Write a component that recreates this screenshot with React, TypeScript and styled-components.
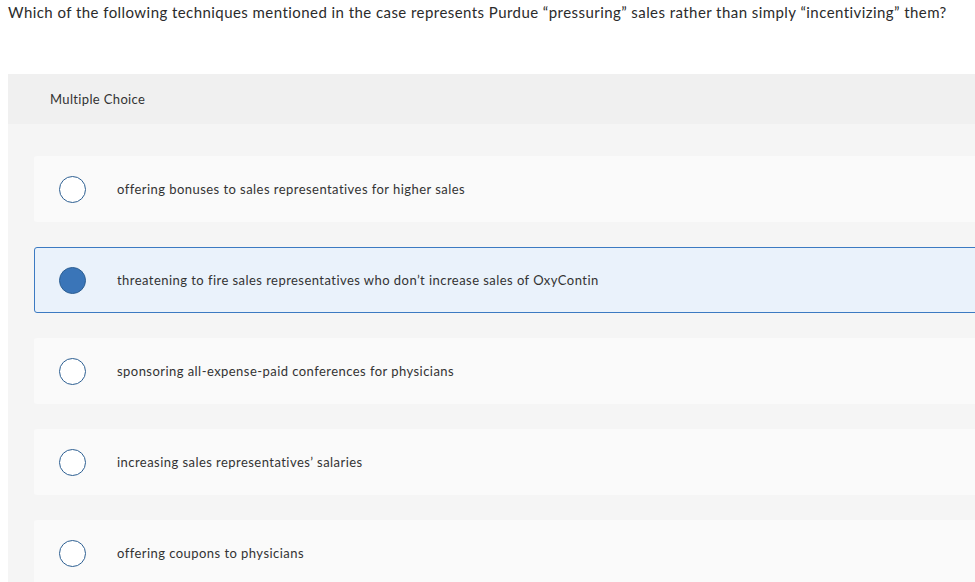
import styled, { createGlobalStyle } from "styled-components";

const GlobalStyle = createGlobalStyle`
  html, body {
    margin: 0;
    padding: 0;
    background: #ffffff;
    overflow: hidden;
  }
  body {
    font-family: "Lato", "Liberation Sans", sans-serif;
    color: #333333;
  }
`;

interface ChoiceProps {
  selected?: boolean;
}

const Page = styled.div`
  width: 975px;
  height: 582px;
  overflow: hidden;
`;

const Question = styled.p`
  margin: 0;
  padding: 3px 0 0 8px;
  font-size: 15px;
  line-height: 18px;
  letter-spacing: 0.44px;
  color: #2b2b2b;
  white-space: nowrap;
`;

const Panel = styled.section`
  margin: 53px 0 0 8px;
  width: 1000px;
  background: #f5f5f5;
`;

const PanelHeader = styled.div`
  display: flex;
  align-items: center;
  height: 50px;
  padding-left: 42px;
  background: #f0f0f0;
  font-size: 13px;
  letter-spacing: 0.35px;
  color: #333333;
`;

const ChoiceList = styled.div`
  display: flex;
  flex-direction: column;
  gap: 25px;
  padding: 32px 0 32px 26px;
`;

const Choice = styled.label<ChoiceProps>`
  display: flex;
  align-items: center;
  height: 66px;
  box-sizing: border-box;
  border-radius: 3px;
  border: 1px solid ${(p) => (p.selected ? "#3c7ac2" : "transparent")};
  background: ${(p) => (p.selected ? "#eaf2fb" : "#fafafa")};
  cursor: pointer;
`;

const Radio = styled.span<ChoiceProps>`
  flex: none;
  width: 27px;
  height: 27px;
  box-sizing: border-box;
  margin: 0 31px 0 24px;
  border-radius: 50%;
  border: 1.5px solid #2d5f92;
  background: ${(p) => (p.selected ? "#3a75b8" : "#ffffff")};
`;

const ChoiceText = styled.span`
  font-size: 13px;
  letter-spacing: 0.45px;
  color: #333333;
`;

const choices = [
  "offering bonuses to sales representatives for higher sales",
  "threatening to fire sales representatives who don’t increase sales of OxyContin",
  "sponsoring all-expense-paid conferences for physicians",
  "increasing sales representatives’ salaries",
  "offering coupons to physicians",
];

export default function App() {
  const selected = 1;
  return (
    <Page>
      <GlobalStyle />
      <Question>
        Which of the following techniques mentioned in the case represents Purdue “pressuring” sales rather than simply
        “incentivizing” them?
      </Question>
      <Panel>
        <PanelHeader>Multiple Choice</PanelHeader>
        <ChoiceList>
          {choices.map((c, i) => (
            <Choice key={c} selected={i === selected}>
              <Radio selected={i === selected} />
              <ChoiceText>{c}</ChoiceText>
            </Choice>
          ))}
        </ChoiceList>
      </Panel>
    </Page>
  );
}
